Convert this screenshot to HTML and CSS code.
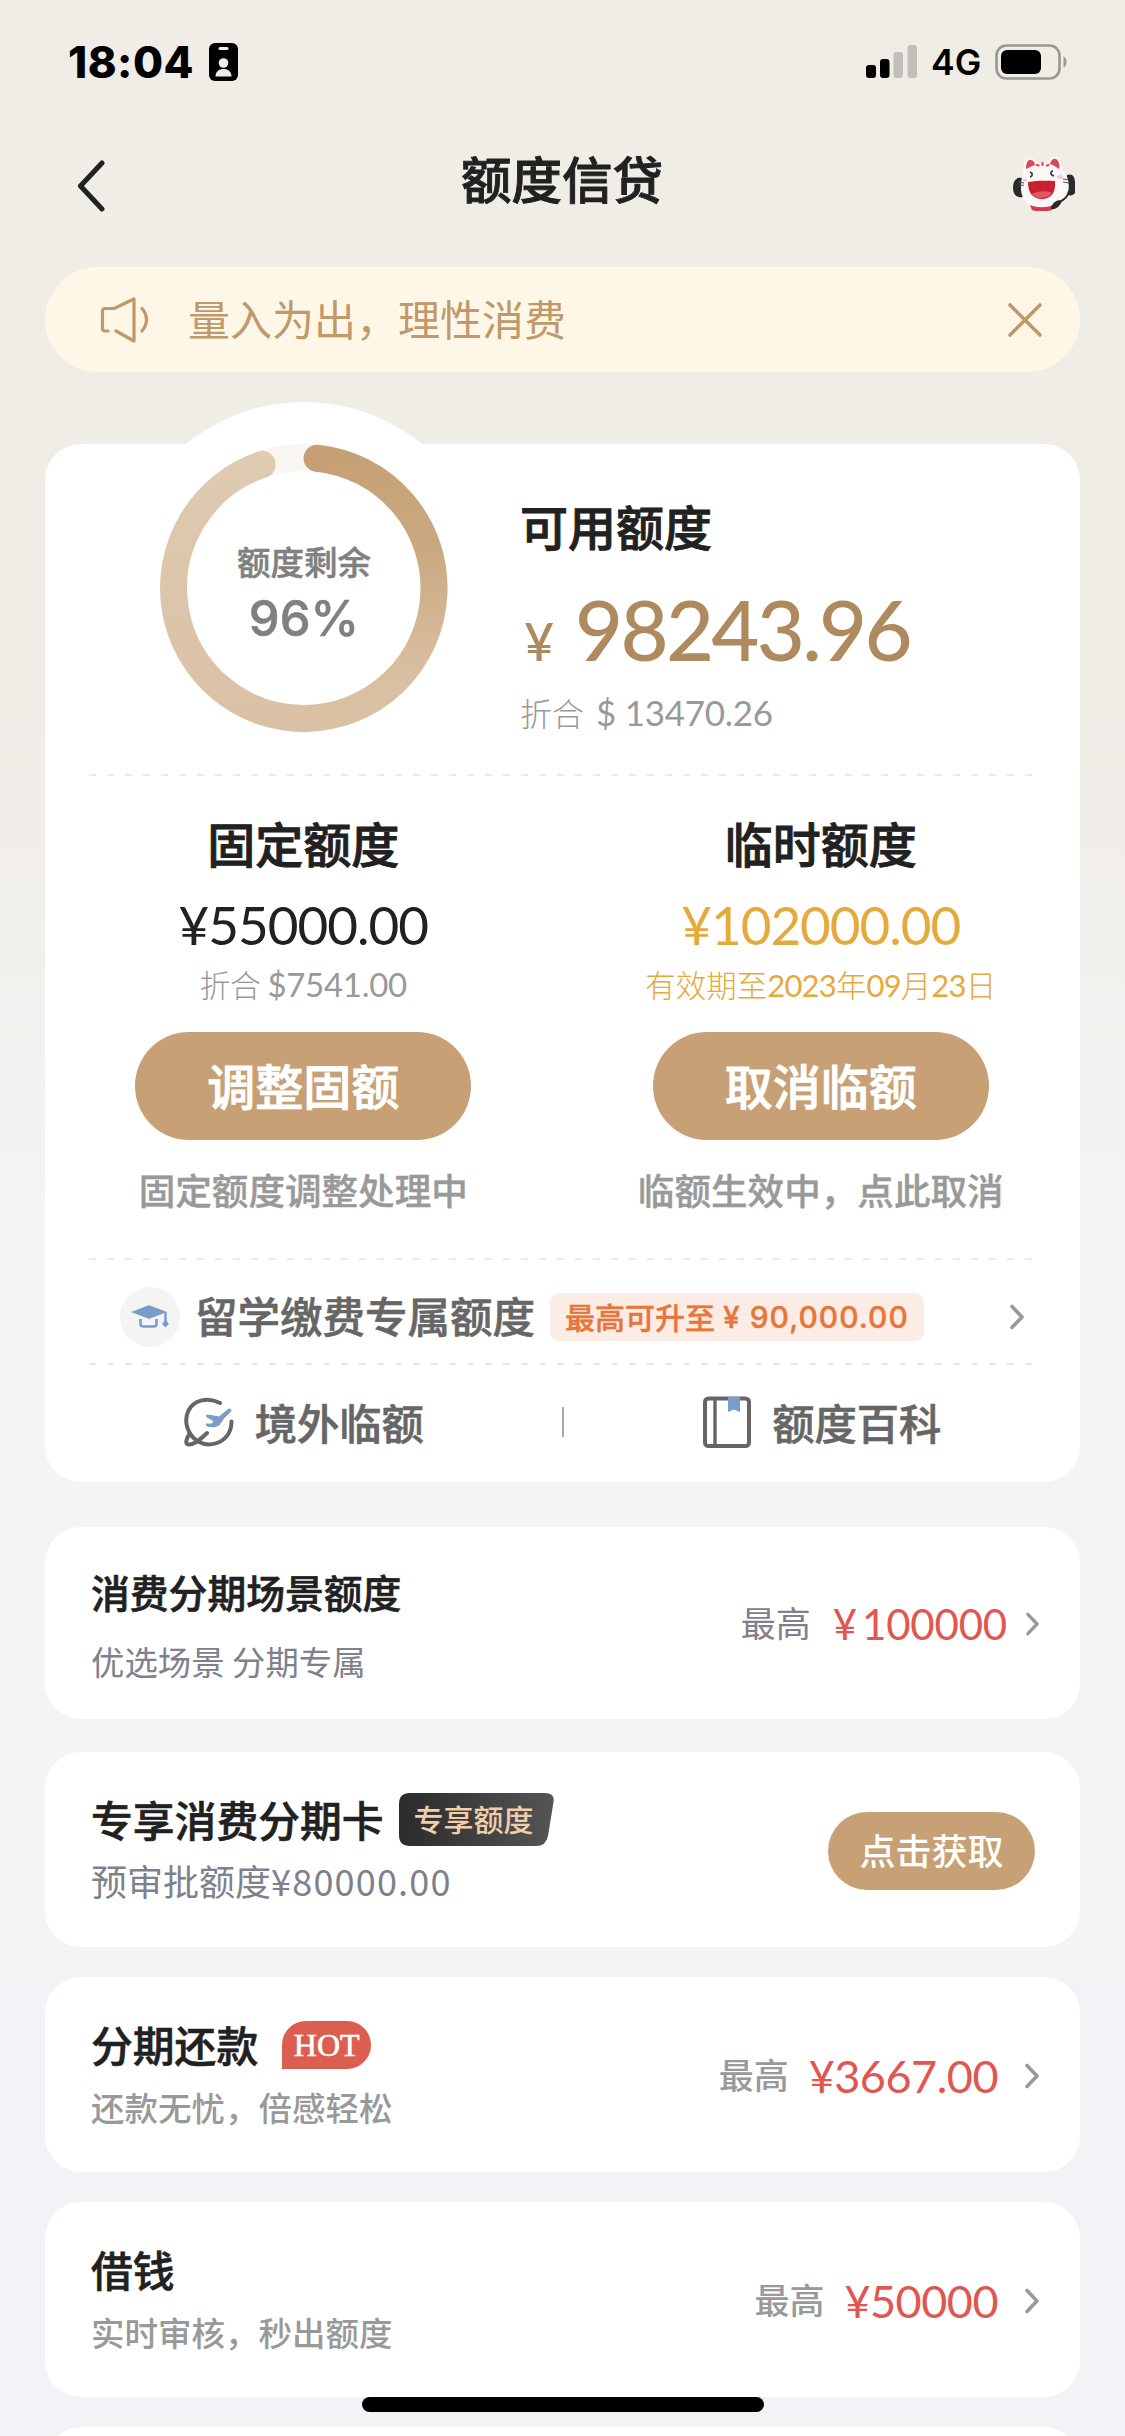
FILE: index.html
```html
<!DOCTYPE html>
<html lang="zh-CN">
<head>
<meta charset="utf-8">
<title>额度信贷</title>
<link rel="stylesheet" href="styles.css">
</head>
<body>
<div class="screen">
  <header class="status">
    <span class="clock">18:04</span>
    <svg class="id-badge" width="29" height="38" viewBox="0 0 29 38"><rect width="29" height="38" rx="6"/><rect x="9.500" y="4" width="10" height="3" rx="1.500" fill="#f0ece6"/><circle cx="14.500" cy="20" r="4.800" fill="#f0ece6"/><path d="M6.500 33.500c0-5 3.500-7.500 8-7.500s8 2.500 8 7.500z" fill="#f0ece6"/></svg>
    <svg class="signal" width="52" height="33" viewBox="0 0 52 33"><rect y="20" width="10" height="13" rx="3"/><rect x="14" y="14" width="9.500" height="19" rx="3"/><rect x="27.500" y="7" width="9.500" height="26" rx="3" fill="#c2bfba"/><rect x="41.500" y="0" width="9.500" height="33" rx="3" fill="#c2bfba"/></svg>
    <span class="network">4G</span>
    <svg class="battery" width="74" height="36" viewBox="0 0 74 36"><rect x="1.500" y="1.500" width="63" height="33" rx="10" fill="none" stroke="#9b9893" stroke-width="2.600"/><rect x="6" y="6" width="40" height="24" rx="6"/><path d="M68.500 12.500c4 1.500 4 9.500 0 11z" fill="#9b9893"/></svg>
  </header>

  <nav class="nav">
    <svg class="back" width="30" height="52" viewBox="0 0 30 52"><path d="M26 3 4.500 26 26 49" fill="none" stroke="#212121" stroke-width="5" stroke-linecap="round" stroke-linejoin="round"/></svg>
    <h1 class="nav-title">额度信贷</h1>
    <svg class="mascot" width="62" height="54" viewBox="0 0 62 54">
      <path d="M9 21C3 20 0 24 0 31s4 10 10 9z" fill="#292a2b"/><path d="M54 18c5-2 8 1 8 8v10c-2 3-6 3-9 1z" fill="#292a2b"/>
      <path d="M10 17C10 6 13 0 17 .500c3 0 6 4 8 6l9-.500c2-4 6-7 9-6 4 1 6 8 6 13 6 5 8 14 6 22-2 10-10 17-23 18C18 53 9 45 8 33c0-6 0-11 2-16z" fill="#fbf8f7"/>
      <path d="M13 12c0-6 2-10 5-9 2 0 4 3 4 5-4 1-6 3-9 4z" fill="#dc4759"/><path d="M37 7c1-4 3-6 6-5 3 2 4 6 3 10-3-2-5-4-9-5z" fill="#dc4759"/>
      <path d="M24 8l1.500.500M29.500 6v2M34 8.500l1.500-.500" stroke="#dc4759" stroke-width="2.200" stroke-linecap="round"/>
      <path d="M17 15c3 1 3 4 0 5M40 14c-3 0-3 4 1 5" fill="none" stroke="#333" stroke-width="1.600"/>
      <ellipse cx="12" cy="23" rx="2.500" ry="1.500" fill="#f7c9ce"/><ellipse cx="47" cy="20" rx="3" ry="2" fill="#f7c9ce"/>
      <path d="M5 25l6 1M6 29l5-1M50 22l6 1M50 25l6 1" stroke="#555" stroke-width="1"/>
      <path d="M15 25c9-1.500 18-1.500 27-1 1 10-3 18-13 18s-14-7-14-17z" fill="#c91f31"/><path d="M19 37c5-3 14-4 20-1-3 5-17 8-20 1z" fill="#dd5966"/>
      <path d="M17 48c7 3 17 3 23 0l-1 5c-6 2-15 2-20 0z" fill="#d9394b"/>
      <path d="M56 34c-1 6-5 9-10 11" fill="none" stroke="#292a2b" stroke-width="1.800"/><path d="M38 50c3-6 7-8 11-6-2 5-6 9-11 8z" fill="#292a2b"/>
    </svg>
  </nav>

  <section class="notice">
    <svg class="speaker" width="50" height="46" viewBox="0 0 50 46" fill="none" stroke="#c0986a" stroke-width="3.200" stroke-linecap="round" stroke-linejoin="round"><path d="M8 34H5Q2.500 34 2.500 31.500V14Q2.500 11.500 5 11.500H14L34 2V44L16 34"/><path d="M42 11.500Q51 22.500 42 34"/></svg>
    <p class="notice-text">量入为出，理性消费</p>
    <svg class="close" width="36" height="36" viewBox="0 0 36 36"><path d="M3 3 33 33M33 3 3 33" stroke="#c0986a" stroke-width="3.600" stroke-linecap="round"/></svg>
  </section>

  <main class="quota">
    <section class="summary">
      <div class="gauge">
        <svg class="gauge-ring" width="372" height="372" viewBox="0 0 372 372">
          <defs>
            <linearGradient id="rise" gradientUnits="userSpaceOnUse" x1="186" y1="42" x2="186" y2="330"><stop offset="0" stop-color="#c6a074"/><stop offset=".35" stop-color="#caa87f"/><stop offset=".8" stop-color="#d9bfa1"/><stop offset="1" stop-color="#dac1a5"/></linearGradient>
            <linearGradient id="fall" gradientUnits="userSpaceOnUse" x1="186" y1="42" x2="186" y2="330"><stop offset="0" stop-color="#dfccb4"/><stop offset=".5" stop-color="#dcc5aa"/><stop offset="1" stop-color="#dac1a5"/></linearGradient>
          </defs>
          <circle cx="186" cy="186" r="186" fill="#fff"/>
          <g fill="none" stroke-width="27">
            <circle cx="186" cy="186" r="130.500" stroke="#f9f6f1"/>
            <path d="M187 316.500A130.500 130.500 0 0 1 144.200 62.400" stroke="url(#fall)" stroke-linecap="round"/>
            <path d="M199 56.200A130.500 130.500 0 0 1 186 316.500" stroke="url(#rise)"/>
          </g>
          <circle cx="199" cy="56.200" r="13.500" fill="#c6a074"/>
        </svg>
        <div class="gauge-text"><span class="gauge-label">额度剩余</span><span class="gauge-value">96%</span></div>
      </div>
      <div class="available">
        <h2 class="available-title">可用额度</h2>
        <p class="available-sum"><span class="yen">¥</span><span class="sum">98243.96</span></p>
        <p class="available-usd">折合<span class="num">$ 13470.26</span></p>
      </div>
    </section>
    <div class="dash"></div>
    <section class="limits">
      <div class="limit">
        <h2 class="limit-title">固定额度</h2>
        <p class="limit-sum">¥55000.00</p>
        <p class="limit-note">折合 <span class="num">$7541.00</span></p>
        <button class="pill">调整固额</button>
        <p class="limit-state">固定额度调整处理中</p>
      </div>
      <div class="limit">
        <h2 class="limit-title">临时额度</h2>
        <p class="limit-sum amber">¥102000.00</p>
        <p class="limit-note date">有效期至<span class="num">2023</span>年<span class="num">09</span>月<span class="num">23</span>日</p>
        <button class="pill">取消临额</button>
        <p class="limit-state">临额生效中，点此取消</p>
      </div>
    </section>
    <div class="dash"></div>
    <section class="study">
      <span class="cap"><svg width="38" height="24" viewBox="0 0 38 24" fill="#789dca"><path d="M0 7 17 .500q1-.500 2 0L36 7 19 13.500q-1 .500-2 0z"/><path d="M9.500 14v5q0 2.500 3 2.500h10q3 0 3-2.500v-5" fill="none" stroke="#789dca" stroke-width="2.600"/><path d="M34.500 7v9" stroke="#789dca" stroke-width="2.400"/><path d="M34.500 14l3.300 5-3.300 3.500-3.300-3.500z"/></svg></span>
      <span class="study-title">留学缴费专属额度</span>
      <span class="study-tag">最高可升至<span class="study-num">¥ 90,000.00</span></span>
      <svg class="chevron" width="16" height="26" viewBox="0 0 16 26"><path d="M3 2.500 13 13 3 23.500"/></svg>
    </section>
    <div class="dash"></div>
    <section class="links">
      <a class="link"><svg width="50" height="50" viewBox="0 0 50 50" fill="none" stroke="#666" stroke-width="4" stroke-linecap="round"><path d="M36 6C24-.500 10 3 4.500 13.500-1 25 4 38 14 44.500c11 6 24 2 30-7 2.500-4 3.500-8 3.500-13"/><path d="M5.500 37C2 42 1 47 4.500 47.500 9 48 17 42 23 36"/><path d="M47 13.500Q47 11 44 12.500L35 20 24 18q-3 0-1 2l7 4-2 3-6 0 1 2 7 1 5-2 5-7 6-6z" fill="#789dca" stroke="#789dca" stroke-width="1"/></svg>境外临额</a>
      <span class="link-rule"></span>
      <a class="link"><svg width="48" height="52" viewBox="0 0 48 52" fill="none"><rect x="2" y="2.500" width="44" height="47.500" rx="3.500" stroke="#666" stroke-width="4"/><path d="M12 2.500V50" stroke="#666" stroke-width="3.400"/><path d="M25 1h12v15l-6-2.500-6 2.500z" fill="#789dca"/></svg>额度百科</a>
    </section>
  </main>

  <section class="offers">
    <article class="offer scene">
      <div class="offer-main"><h3 class="offer-title">消费分期场景额度</h3><p class="offer-sub">优选场景 分期专属</p></div>
      <div class="offer-side"><span class="top">最高</span><span class="price">¥&thinsp;100000</span><svg class="chevron" width="15" height="24" viewBox="0 0 16 26"><path d="M3 2.500 13 13 3 23.500"/></svg></div>
    </article>
    <article class="offer card-offer">
      <div class="offer-main"><h3 class="offer-title">专享消费分期卡<span class="exclusive"><svg class="exclusive-shape" width="156" height="53" viewBox="0 0 156 53"><defs><linearGradient id="ink" x1="0" x2="1"><stop offset="0" stop-color="#2b2b2b"/><stop offset="1" stop-color="#555"/></linearGradient></defs><path d="M11 0H146Q156 0 154.500 9L149 43Q147 53 137 53H11Q0 53 0 42V11Q0 0 11 0Z" fill="url(#ink)"/></svg><span class="exclusive-text">专享额度</span></span></h3><p class="offer-sub">预审批额度<span class="preapproved">¥80000.00</span></p></div>
      <button class="get">点击获取</button>
    </article>
    <article class="offer">
      <div class="offer-main"><h3 class="offer-title">分期还款<span class="hot">HOT</span></h3><p class="offer-sub">还款无忧，倍感轻松</p></div>
      <div class="offer-side"><span class="top">最高</span><span class="price">¥3667.00</span><svg class="chevron" width="16" height="26" viewBox="0 0 16 26"><path d="M3 2.500 13 13 3 23.500"/></svg></div>
    </article>
    <article class="offer">
      <div class="offer-main"><h3 class="offer-title">借钱</h3><p class="offer-sub">实时审核，秒出额度</p></div>
      <div class="offer-side"><span class="top">最高</span><span class="price">¥50000</span><svg class="chevron" width="16" height="26" viewBox="0 0 16 26"><path d="M3 2.500 13 13 3 23.500"/></svg></div>
    </article>
    <article class="offer"></article>
  </section>
  <div class="home-bar"></div>
</div>
</body>
</html>
```
FILE: styles.css
```css
* { box-sizing: border-box; margin: 0; padding: 0; }
body { font-family: "Noto Sans CJK SC", sans-serif; color: #212121; }
h1, h2, h3, .pill { font-weight: 500; -webkit-text-stroke: 0.900px currentColor; }
svg { display: block; flex: none; }
button { border: 0; font-family: inherit; color: #fff; background: #c7a175; }

.screen {
  position: relative;
  width: 1125px;
  height: 2436px;
  overflow: hidden;
  background: linear-gradient(#f0ece6 0, #f0ece6 690px, #f4f4f4 1240px, #f4f4f4 1977px, #f2f3f6 1977px);
}

/* status bar */
.status { height: 123px; display: flex; align-items: center; padding: 0 56px 0 68px; color: #000; }
.clock { font: 800 43.500px/60px Inter, sans-serif; letter-spacing: 0.500px; width: 141px; }
.signal { margin-left: auto; }
.network { font: 600 35.500px/60px Inter, sans-serif; margin: 2px 14px 0 13px; width: 50px; }

/* title bar */
.nav { height: 144px; display: flex; justify-content: space-between; align-items: flex-start; padding: 34px 50px 0 76px; }
.back { margin-top: 3px; }
.nav-title { font-size: 50.500px; line-height: 60px; margin: -10px 0 0 5px; }

/* notice strip */
.notice { height: 105px; margin: 0 45px; padding: 0 37px 0 55px; border-radius: 53px; background: #fef7e8; display: flex; align-items: center; color: #c0986a; }
.notice-text { font-size: 42px; line-height: 60px; margin: -4px 0 0 38px; flex: 1; }

/* quota card */
.quota { margin: 72px 45px 0; height: 1038px; border-radius: 36px; background: #fff; }
.dash { height: 2px; margin: 0 47px 0 44px; background: repeating-linear-gradient(90deg, #e9e9e9 0 7px, transparent 7px 18px); }

.summary { height: 330px; display: flex; align-items: flex-start; }
.gauge { display: grid; margin: -42px 0 0 73px; width: 372px; height: 372px; }
.gauge-ring, .gauge-text { grid-area: 1 / 1; }
.gauge-text { display: flex; flex-direction: column; align-items: center; color: #808080; padding-top: 139px; z-index: 1; }
.gauge-label { font-size: 33.500px; line-height: 40px; font-weight: 500; -webkit-text-stroke: 0.500px currentColor; }
.gauge-value { font: 500 49px/60px Inter, sans-serif; margin-top: 8px; -webkit-text-stroke: 0.600px currentColor; }
.available { padding: 51px 0 0 30px; white-space: nowrap; }
.available-title { font-size: 48px; line-height: 60px; }
.available-sum { display: flex; align-items: baseline; height: 80px; margin-top: 34px; color: #af8a5f; font-family: Lato, sans-serif; line-height: 80px; }
.yen { font-size: 52px; width: 55px; font-weight: 500; padding-left: 4px; }
.sum { font-size: 83px; font-weight: 500; letter-spacing: -2.700px; }
.available-usd { font-size: 32px; line-height: 40px; font-weight: 300; color: #999; margin-top: 23px; }
.num { font-family: Lato, sans-serif; font-weight: 400; }
.available-usd .num { font-size: 35px; margin-left: 12px; letter-spacing: -0.300px; }

.limits { height: 482px; display: grid; grid-template-columns: 1fr 1fr; }
.limit { display: flex; flex-direction: column; align-items: center; padding: 36px 1px 0 0; white-space: nowrap; }
.limit-title { font-size: 48px; line-height: 60px; }
.limit-sum { font: 400 53px/60px Lato, sans-serif; margin-top: 23px; letter-spacing: -1px; }
.limit-note { font-size: 30.500px; line-height: 40px; font-weight: 300; color: #999; margin-top: 9px; height: 40px; }
.limit-note .num { font-size: 33px; letter-spacing: -0.300px; }
.limit-sum.amber, .limit-note.date { color: #e6a93c; }
.limit-note.date .num { font-size: 31px; letter-spacing: -0.800px; }
.pill { width: 336px; height: 108px; border-radius: 54px; font-size: 48px; line-height: 104px; margin-top: 28px; padding-bottom: 4px; }
.limit-state { font-size: 36.600px; line-height: 50px; font-weight: 500; color: #999; margin-top: 25px; -webkit-text-stroke: 0.400px currentColor; }

.study { height: 103px; display: flex; align-items: center; padding: 11px 55px 0 75px; color: #666; }
.cap { width: 60px; height: 60px; border-radius: 30px; background: #f4f4f4; display: flex; align-items: center; justify-content: center; }
.study-title { font-size: 42.500px; line-height: 56px; font-weight: 500; margin: -4px 0 0 15px; -webkit-text-stroke: 0.600px currentColor; }
.study-tag { display: flex; align-items: center; height: 48px; margin-left: 15px; padding: 0 15px 3px; width: 374px; border-radius: 9px; background: #fbece6; color: #e87639; font-size: 30px; font-weight: 500; white-space: nowrap; -webkit-text-stroke: 0.400px currentColor; }
.study-num { font: 500 30px/40px Inter, sans-serif; margin: 3px 0 0 8px; letter-spacing: 1px; }
.study .chevron { margin-left: auto; }
.chevron path { fill: none; stroke: #999; stroke-width: 3.600; stroke-linecap: round; stroke-linejoin: round; }

.links { height: 118px; display: grid; grid-template-columns: 1fr 2px 1fr; align-items: center; padding-bottom: 5px; }
.link { display: flex; align-items: center; justify-content: center; gap: 21px; font-size: 42.300px; line-height: 56px; font-weight: 500; color: #666; padding-left: 1px; -webkit-text-stroke: 0.600px currentColor; }
.link-rule { height: 30px; background: #aaa; }

/* offers */
.offers { display: flex; flex-direction: column; gap: 30px; margin: 45px 45px 0; }
.offer { height: 195px; border-radius: 36px; background: #fff; padding: 42px 40px 0 46px; display: flex; justify-content: space-between; align-items: flex-start; flex: none; }
.offer-title { display: flex; align-items: center; font-size: 41.800px; line-height: 50px; height: 50px; -webkit-text-stroke-width: 0.600px; }
.offer-sub { font-size: 33.500px; line-height: 44px; height: 44px; font-weight: 500; color: #999; margin-top: 16px; }
.offer-side { display: flex; align-items: center; height: 60px; margin-top: 27px; }
.top { font-size: 35px; line-height: 50px; font-weight: 500; color: #999; margin-top: -4px; }
.price { font: 400 45px/60px Lato, sans-serif; color: #e05650; margin: 0 26px 0 20px; letter-spacing: -0.500px; }

.scene { height: 192px; margin-bottom: 3px; }
.scene .offer-title { font-size: 38.800px; margin-top: -3px; }
.scene .offer-sub { font-size: 33.400px; font-weight: 400; color: #80808c; margin-top: 23px; }
.scene .offer-side { margin-top: 25px; }
.scene .top { font-weight: 400; color: #80808c; }
.scene .price { font-size: 42px; margin: 0 18px 0 22px; letter-spacing: -0.200px; }
.card-offer .offer-sub { font-size: 36px; font-weight: 400; color: #80808c; margin-top: 14px; }
.preapproved { letter-spacing: 1.200px; }
.exclusive { display: grid; margin-left: 15px; align-items: center; justify-items: center; -webkit-text-stroke-width: 0; }
.exclusive-shape, .exclusive-text { grid-area: 1 / 1; }
.exclusive-text { color: #f0cfa8; font-size: 30px; line-height: 44px; font-weight: 500; z-index: 1; margin: -3px 6px 0 0; }
.get { width: 207px; height: 78px; border-radius: 39px; font-size: 36px; font-weight: 500; line-height: 74px; padding-bottom: 4px; margin: 18px 5px 0 0; }
.hot { width: 89px; height: 48px; margin: 2px 0 0 24px; border-radius: 24px 24px 24px 0; background: #dc5e50; color: #fff; font: 400 32px/48px "Liberation Serif", serif; text-align: center; }

.home-bar { position: absolute; left: 362px; top: 2397px; width: 402px; height: 15px; border-radius: 8px; background: #000; }
```
